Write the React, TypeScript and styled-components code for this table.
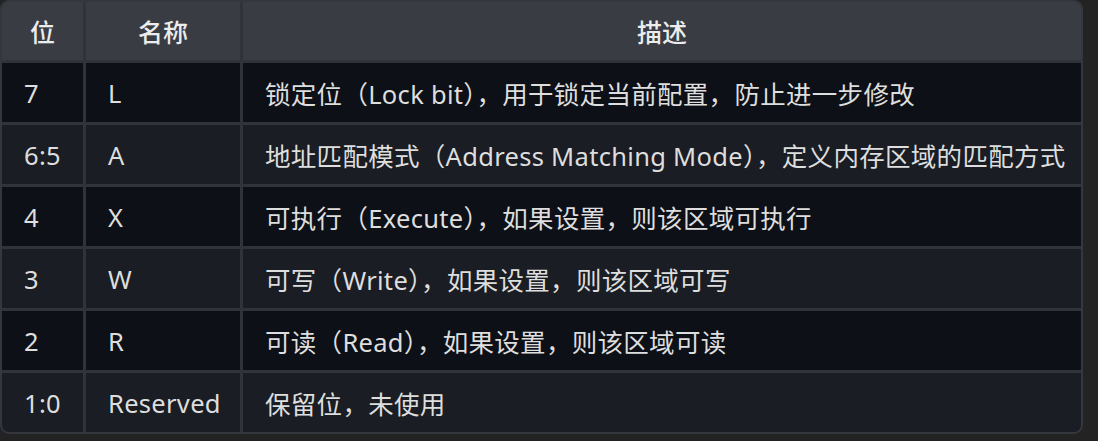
import React from 'react';
import styled, { createGlobalStyle } from 'styled-components';

const GlobalStyle = createGlobalStyle`
  html, body {
    margin: 0;
    padding: 0;
    background: #232323;
  }
  body {
    font-family: 'Noto Sans', 'Noto Sans CJK SC', sans-serif;
  }
`;

const StyledPage = styled.div`
  width: 1098px;
  height: 441px;
  background: #232323;
`;

const StyledTable = styled.div`
  width: 1083px;
  box-sizing: border-box;
  display: grid;
  grid-template-columns: 81px 154px 1fr;
  grid-template-rows: 58px repeat(6, 59px);
  gap: 3px;
  background: #30333a;
  border: 2px solid #34373e;
  border-radius: 9px;
  overflow: hidden;
`;

const StyledHeadCell = styled.div`
  display: flex;
  align-items: center;
  justify-content: center;
  background: #393c43;
  color: #ececec;
  font-size: 25px;
  font-weight: 500;
`;

const StyledCell = styled.div<{ $alt: boolean }>`
  display: flex;
  align-items: center;
  padding-left: 22px;
  background: ${p => (p.$alt ? '#1a1d23' : '#0d1016')};
  color: #dedede;
  font-size: 25.5px;
  letter-spacing: 0.3px;
  white-space: nowrap;
`;

const rows = [
  { bit: '7', name: 'L', desc: '锁定位（Lock bit），用于锁定当前配置，防止进一步修改' },
  { bit: '6:5', name: 'A', desc: '地址匹配模式（Address Matching Mode），定义内存区域的匹配方式' },
  { bit: '4', name: 'X', desc: '可执行（Execute），如果设置，则该区域可执行' },
  { bit: '3', name: 'W', desc: '可写（Write），如果设置，则该区域可写' },
  { bit: '2', name: 'R', desc: '可读（Read），如果设置，则该区域可读' },
  { bit: '1:0', name: 'Reserved', desc: '保留位，未使用' },
];

const App: React.FC = () => {
  return (
    <StyledPage>
      <GlobalStyle />
      <StyledTable>
        <StyledHeadCell>位</StyledHeadCell>
        <StyledHeadCell>名称</StyledHeadCell>
        <StyledHeadCell>描述</StyledHeadCell>
        {rows.map((r, i) => (
          <React.Fragment key={r.bit}>
            <StyledCell $alt={i % 2 === 1}>{r.bit}</StyledCell>
            <StyledCell $alt={i % 2 === 1}>{r.name}</StyledCell>
            <StyledCell $alt={i % 2 === 1}>{r.desc}</StyledCell>
          </React.Fragment>
        ))}
      </StyledTable>
    </StyledPage>
  );
};

export default App;
